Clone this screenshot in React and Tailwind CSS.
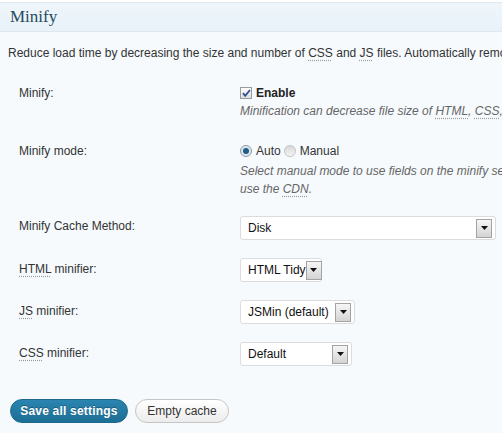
import React from 'react';

const Abbr = ({ children }) => (
  <span className="underline decoration-dotted decoration-[#9a9a9a] underline-offset-[3px]">{children}</span>
);

const Arrow = () => (
  <span className="flex h-[19px] w-[16px] shrink-0 items-center justify-center border border-[#a3a3a3] bg-gradient-to-b from-[#f6f6f6] to-[#d4d4d4]">
    <svg width="7" height="4" viewBox="0 0 7 4"><path d="M0 0h7L3.5 4z" fill="#111" /></svg>
  </span>
);

const Select = ({ value, width }) => (
  <div className={`flex h-[24px] items-center rounded-[3px] border border-[#dcdcdc] bg-white pl-[7px] pr-[3px] text-[12px] text-[#111] ${width}`}>
    <span className="flex-1 whitespace-nowrap">{value}</span>
    <Arrow />
  </div>
);

const Row = ({ label, children, className = '', labelClass = '' }) => (
  <div className={`flex ${className}`}>
    <div className={`w-[232px] shrink-0 pl-[11px] ${labelClass}`}>{label}</div>
    <div className="flex-1">{children}</div>
  </div>
);

export default function App() {
  return (
    <div className="h-[433px] w-[502px] overflow-hidden bg-white font-['Liberation_Sans',Arial,sans-serif] text-[12px] leading-[18px] text-[#333]">
      <div className="h-[2px] bg-white" />
      <div className="w-[900px] bg-[#f6fafd]">
        <div className="flex h-[30px] items-center border-y border-[#dfe8ef] bg-gradient-to-b from-[#eef5fb] to-[#e9f2f9] pl-[10px]">
          <h2 className="font-['Liberation_Serif',Georgia,serif] text-[17px] text-[#254a5c]">Minify</h2>
        </div>
        <div className="pb-[80px] pl-[8px]">
          <p className="mt-[12px] whitespace-nowrap">
            Reduce load time by decreasing the size and number of <Abbr>CSS</Abbr> and <Abbr>JS</Abbr> files. Automatically remove unnecessary data from CSS, JS, feed, page and post HTML.
          </p>

          <Row label="Minify:" className="mt-[22px]">
            <div className="flex items-center">
              <span className="mr-[4px] flex h-[12px] w-[12px] items-center justify-center border border-[#9c9c9c] bg-gradient-to-b from-[#ffffff] to-[#dcdcdc]">
                <svg width="9" height="8" viewBox="0 0 9 8"><path d="M1 4.2l2.2 2.6L8 1" fill="none" stroke="#2f4f8f" strokeWidth="1.8" /></svg>
              </span>
              <span className="font-bold text-[#222]">Enable</span>
            </div>
            <p className="whitespace-nowrap italic text-[#666]">
              Minification can decrease file size of <Abbr>HTML</Abbr>, <Abbr>CSS</Abbr>, <Abbr>JS</Abbr> and feeds respectively by ~10% on average.
            </p>
          </Row>

          <Row label="Minify mode:" className="mt-[22px]">
            <div className="flex items-center">
              <span className="mr-[4px] flex h-[12px] w-[12px] items-center justify-center rounded-full border border-[#8c9aa6] bg-[#dfe8ef]">
                <span className="h-[6px] w-[6px] rounded-full bg-[#1f5c86]" />
              </span>
              <span className="mr-[3px]">Auto</span>
              <span className="mr-[4px] h-[12px] w-[12px] rounded-full border border-[#c4c4c4] bg-gradient-to-b from-[#d8d8d8] to-[#f4f4f4]" />
              <span>Manual</span>
            </div>
            <p className="mt-[2px] whitespace-nowrap italic text-[#666]">
              Select manual mode to use fields on the minify settings tab to specify files to be minified, otherwise files will be minified automatically and
              <br />
              use the <Abbr>CDN</Abbr>.
            </p>
          </Row>

          <Row label="Minify Cache Method:" className="mt-[18px]" labelClass="pt-[1px]">
            <Select value="Disk" width="w-[256px]" />
          </Row>

          <Row label={<><Abbr>HTML</Abbr> minifier:</>} className="mt-[18px]" labelClass="pt-[2px]">
            <Select value="HTML Tidy" width="w-[82px]" />
          </Row>

          <Row label={<><Abbr>JS</Abbr> minifier:</>} className="mt-[18px]" labelClass="pt-[2px]">
            <Select value="JSMin (default)" width="w-[115px]" />
          </Row>

          <Row label={<><Abbr>CSS</Abbr> minifier:</>} className="mt-[18px]" labelClass="pt-[2px]">
            <Select value="Default" width="w-[112px]" />
          </Row>

          <div className="mt-[33px] flex gap-[7px] pl-[2px]">
            <button className="h-[24px] w-[118px] rounded-full border border-[#1b6a8e] bg-gradient-to-b from-[#2a85b0] to-[#1d6e95] text-[12px] font-bold tracking-[0.2px] text-white [text-shadow:0_-1px_0_rgba(0,0,0,0.3)]">
              Save all settings
            </button>
            <button className="h-[24px] w-[94px] rounded-full border border-[#c6c6c6] bg-gradient-to-b from-[#ffffff] to-[#ececec] text-[12px] text-[#333]">
              Empty cache
            </button>
          </div>
        </div>
      </div>
    </div>
  );
}
